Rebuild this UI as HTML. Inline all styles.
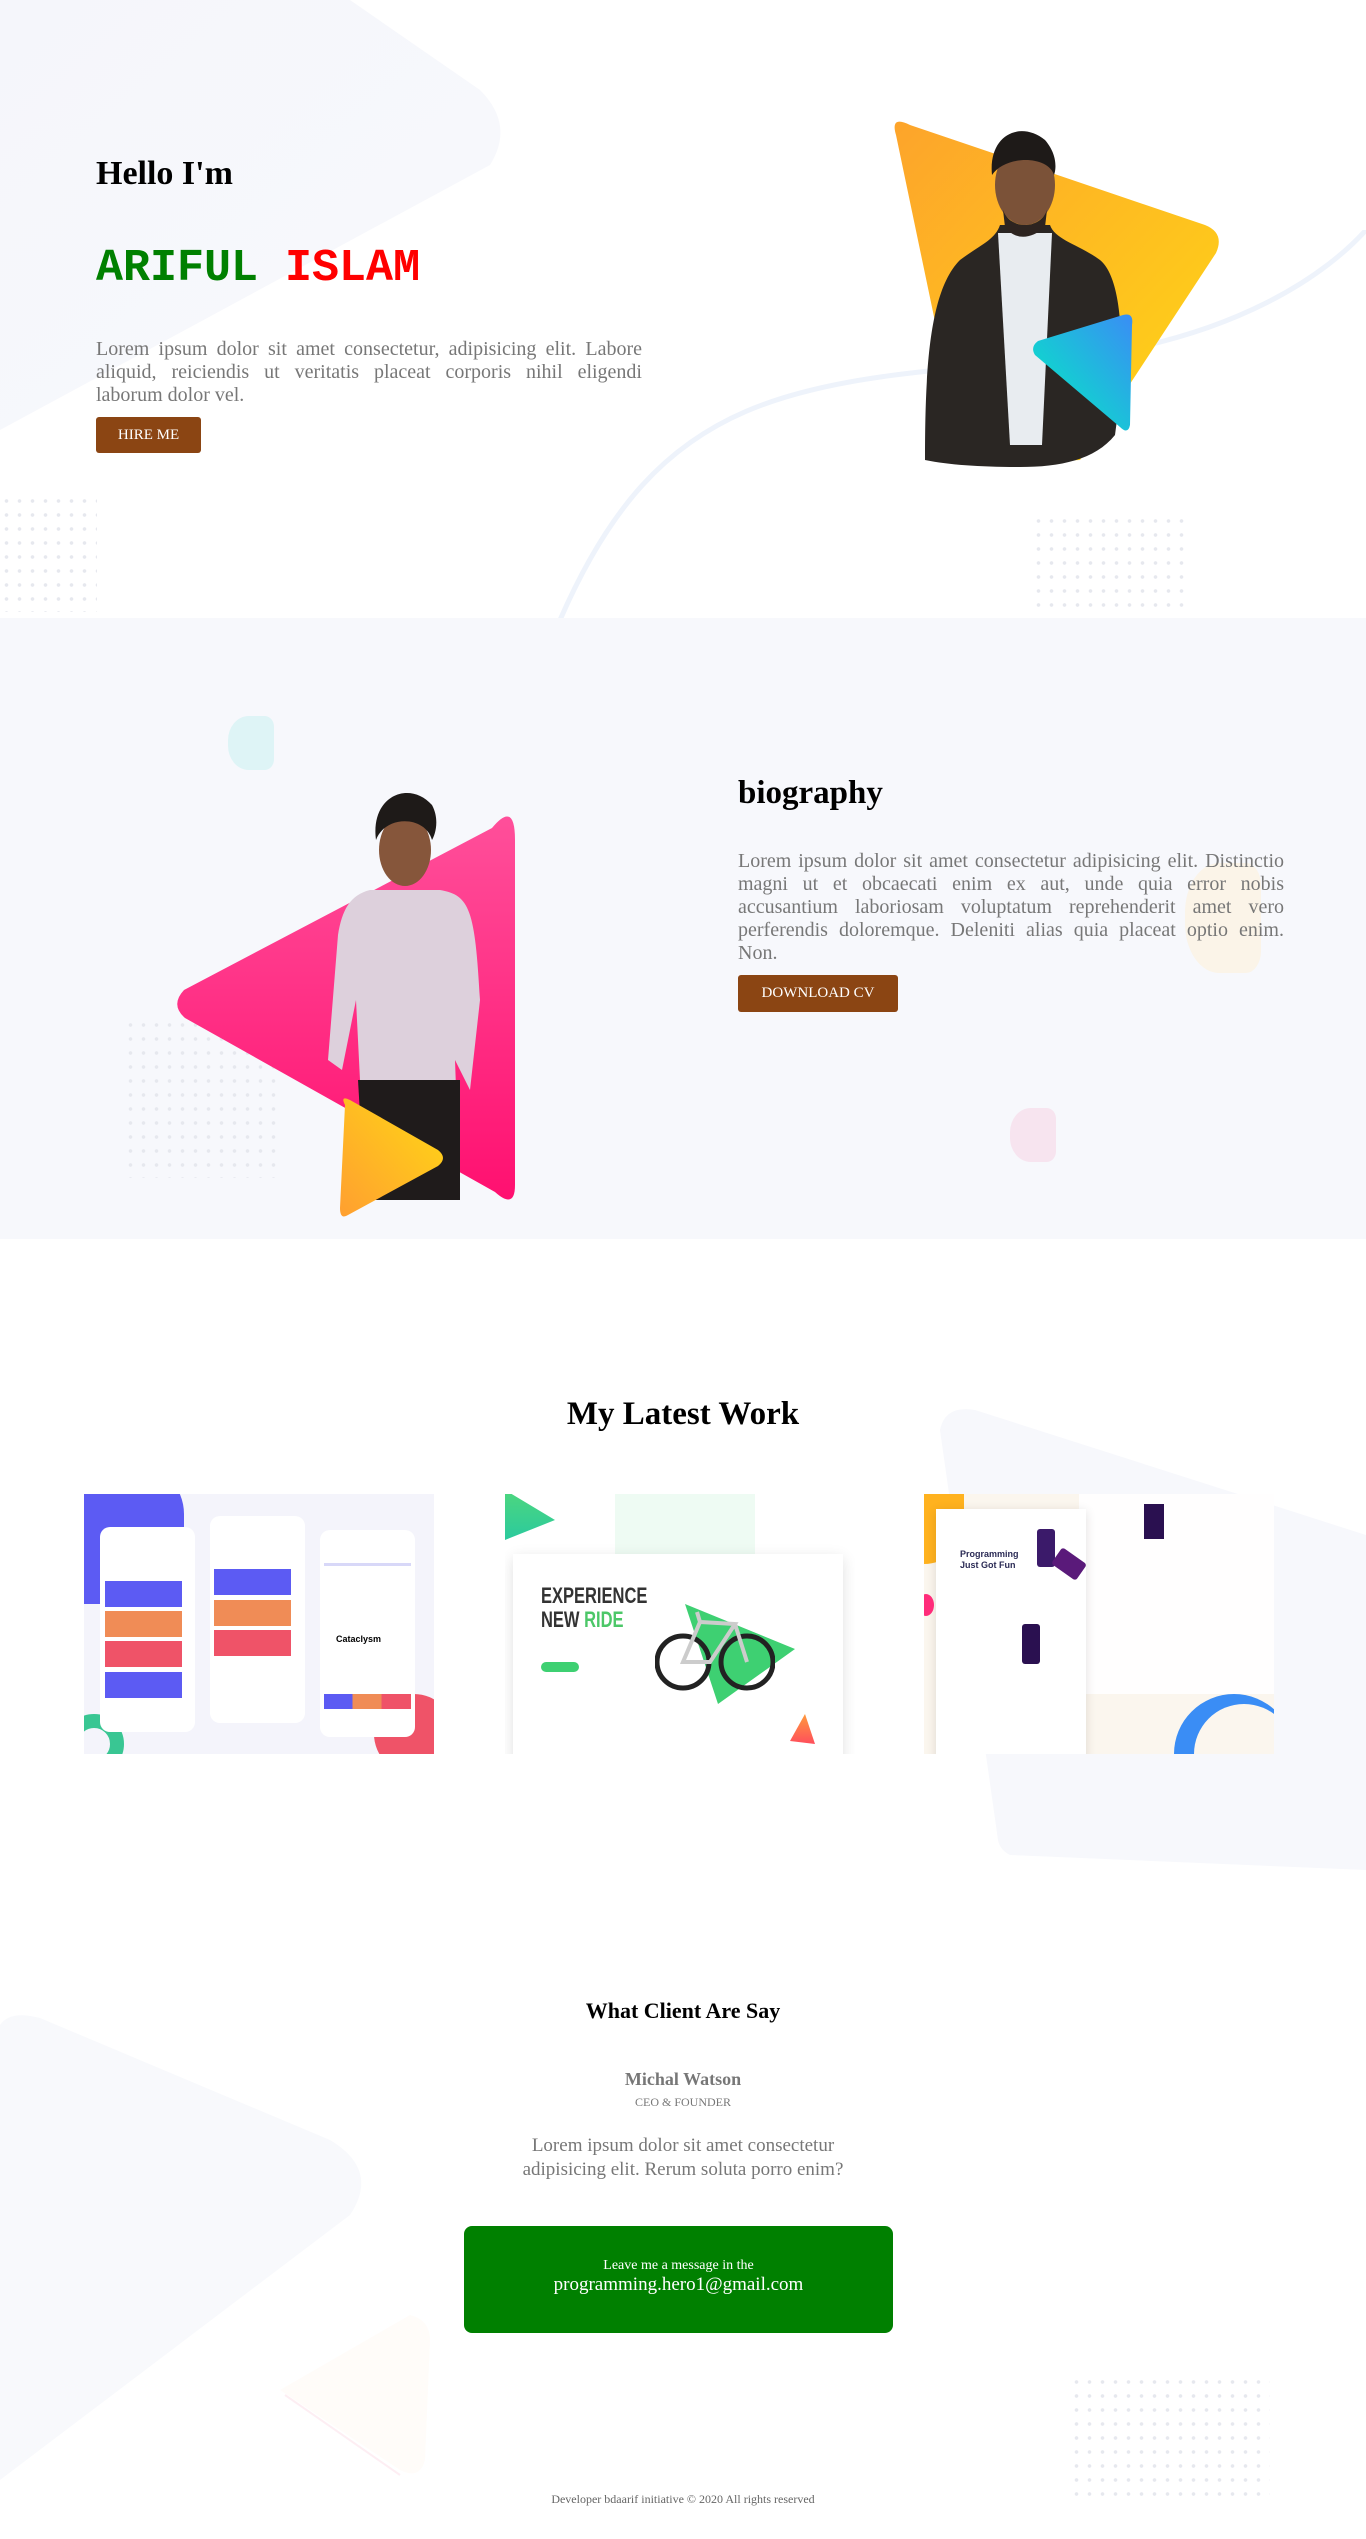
<!DOCTYPE html>
<html><head><meta charset="utf-8"><style>
*{margin:0;padding:0;box-sizing:border-box}
body{width:1366px;height:2539px;position:relative;overflow:hidden;background:#fff;font-family:"Liberation Serif",serif}
.a{position:absolute}
.dots{background-image:radial-gradient(circle,#e6e8ee 1.6px,transparent 2px);background-size:13px 14px}
.btn{background:#8B4513;color:#fff;font-size:15px;border-radius:3px;display:flex;align-items:center;justify-content:center}
p.j{text-align:justify;color:#777;font-size:20px;line-height:23px}
</style></head><body>

<!-- HERO -->
<svg class="a" style="left:0;top:0" width="520" height="440"><defs><linearGradient id="bg1" x1="0" y1="0" x2="1" y2="1"><stop offset="0" stop-color="#f5f6fb"/><stop offset="1" stop-color="#f8f9fc"/></linearGradient></defs>
<path d="M0 0 L350 0 L480 90 Q515 125 490 165 L0 430 Z" fill="url(#bg1)"/></svg>
<svg class="a" style="left:540px;top:230px" width="826" height="390"><path d="M20 390 C120 160 250 150 520 130 C700 110 790 40 826 0" fill="none" stroke="#eef3fb" stroke-width="5"/></svg>
<div class="a dots" style="left:0;top:494px;width:97px;height:118px"></div>
<div class="a dots" style="left:1032px;top:514px;width:158px;height:98px"></div>

<div class="a" style="left:96px;top:155px;font-size:34px;font-weight:bold;color:#000">Hello I'm</div>
<div class="a" style="left:96px;top:243px;font-family:'Liberation Mono',monospace;font-size:45px;font-weight:bold"><span style="color:#008000">ARIFUL</span> <span style="color:#f00">ISLAM</span></div>
<p class="a j" style="left:96px;top:338px;width:546px">Lorem ipsum dolor sit amet consectetur, adipisicing elit. Labore aliquid, reiciendis ut veritatis placeat corporis nihil eligendi laborum dolor vel.</p>
<div class="a btn" style="left:96px;top:417px;width:105px;height:36px">HIRE ME</div>

<svg class="a" style="left:870px;top:115px" width="360" height="360">
<defs><linearGradient id="y1" x1="0" y1="0" x2="1" y2="1"><stop offset="0" stop-color="#fda42b"/><stop offset="1" stop-color="#ffd815"/></linearGradient>
<linearGradient id="t1" x1="1" y1="0" x2="0" y2="1"><stop offset="0" stop-color="#3a8df5"/><stop offset="1" stop-color="#00f0c0"/></linearGradient></defs>
<path d="M26 20 Q20 0 40 10 L335 110 Q355 118 346 138 L210 345 L95 350 Z" fill="url(#y1)"/>
<g>
<path d="M55 345 C55 250 60 175 90 145 C110 130 125 125 130 110 L180 110 C185 125 210 130 230 145 C255 165 255 250 245 320 C225 345 190 352 150 352 C110 352 80 350 55 345Z" fill="#2a2623"/>
<path d="M128 118 L182 118 L172 330 L140 330 Z" fill="#e8ecf0"/>
<ellipse cx="155" cy="70" rx="30" ry="40" fill="#7b5238"/>
<path d="M122 60 C118 20 150 5 175 25 C188 40 186 55 184 60 C178 40 135 40 122 60Z" fill="#1e1a18"/>
<path d="M133 95 C140 115 170 115 177 95 L175 112 C160 125 145 125 135 112Z" fill="#2d2420"/>
</g>
<path d="M165 240 Q160 232 168 226 L253 200 Q264 197 262 210 L260 310 Q258 320 250 312 Z" fill="url(#t1)"/>
</svg>

<!-- BIO -->
<div class="a" style="left:0;top:618px;width:1366px;height:621px;background:#f7f8fc;overflow:hidden">
<div class="a" style="left:228px;top:98px;width:46px;height:54px;background:#def4f6;border-radius:45% 20% 20% 45%"></div>
<div class="a" style="left:1010px;top:490px;width:46px;height:54px;background:#f7e4ef;border-radius:45% 20% 20% 45%"></div>
<div class="a" style="left:1185px;top:245px;width:76px;height:110px;background:#fbf3e2;border-radius:45% 20% 20% 45%;opacity:.8"></div>
<div class="a dots" style="left:124px;top:400px;width:158px;height:160px"></div>
</div>
<svg class="a" style="left:170px;top:760px" width="360" height="460">
<defs><linearGradient id="p1" x1="0" y1="0" x2="0" y2="1"><stop offset="0" stop-color="#ff4f9a"/><stop offset="1" stop-color="#ff1070"/></linearGradient>
<linearGradient id="y2" x1="1" y1="0" x2="0" y2="1"><stop offset="0" stop-color="#ffd815"/><stop offset="1" stop-color="#ff9f30"/></linearGradient></defs>
<path d="M322 68 Q345 40 345 80 L345 425 Q345 450 325 432 L15 258 Q0 245 14 230 Z" fill="url(#p1)"/>
<path d="M200 130 C180 135 172 150 168 175 L158 300 L172 310 L186 240 L190 320 L200 430 L290 440 L285 300 L300 330 L310 240 C305 150 300 135 270 130 Z" fill="#ddd0dc"/>
<path d="M188 320 L290 320 L290 440 L195 440 Z" fill="#1f1b1b"/>
<ellipse cx="235" cy="90" rx="26" ry="36" fill="#86563b"/>
<path d="M206 80 C200 35 240 20 262 45 C270 60 265 75 262 80 C255 55 215 55 206 80Z" fill="#1e1a18"/>
<path d="M175 345 Q170 335 180 340 L268 390 Q278 398 268 406 L178 455 Q170 460 170 448 Z" fill="url(#y2)"/>
</svg>
<div class="a" style="left:738px;top:775px;font-size:33px;font-weight:bold;color:#000">biography</div>
<p class="a j" style="left:738px;top:850px;width:546px">Lorem ipsum dolor sit amet consectetur adipisicing elit. Distinctio magni ut et obcaecati enim ex aut, unde quia error nobis accusantium laboriosam voluptatum reprehenderit amet vero perferendis doloremque. Deleniti alias quia placeat optio enim. Non.</p>
<div class="a btn" style="left:738px;top:975px;width:160px;height:37px">DOWNLOAD CV</div>

<!-- WORK -->
<svg class="a" style="left:900px;top:1400px" width="466" height="480"><path d="M40 30 Q45 5 75 10 L466 135 L466 470 L110 455 Q100 450 98 440 Z" fill="#f7f8fc"/></svg>
<div class="a" style="left:0;top:1396px;width:1366px;text-align:center;font-size:33px;font-weight:bold">My Latest Work</div>

<div class="a" style="left:84px;top:1494px;width:350px;height:260px;background:#f4f4fb;overflow:hidden">
<div class="a" style="left:-20px;top:-30px;width:120px;height:140px;background:#5c5bf3;border-radius:0 50px 60px 0"></div>
<div class="a" style="left:-20px;top:220px;width:60px;height:60px;border:14px solid #39c693;border-radius:50%"></div>
<div class="a" style="left:290px;top:200px;width:80px;height:80px;background:#ef5368;border-radius:50%"></div>
<div class="a" style="left:16px;top:33px;width:95px;height:205px;background:#fff;border-radius:10px"></div>
<div class="a" style="left:21px;top:87px;width:77px;height:26px;background:#5c5bf3"></div>
<div class="a" style="left:21px;top:117px;width:77px;height:26px;background:#f08c56"></div>
<div class="a" style="left:21px;top:147px;width:77px;height:26px;background:#ef5368"></div>
<div class="a" style="left:21px;top:178px;width:77px;height:26px;background:#5c5bf3"></div>
<div class="a" style="left:126px;top:22px;width:95px;height:207px;background:#fff;border-radius:10px"></div>
<div class="a" style="left:130px;top:75px;width:77px;height:26px;background:#5c5bf3"></div>
<div class="a" style="left:130px;top:106px;width:77px;height:26px;background:#f08c56"></div>
<div class="a" style="left:130px;top:136px;width:77px;height:26px;background:#ef5368"></div>
<div class="a" style="left:236px;top:36px;width:95px;height:207px;background:#fff;border-radius:10px"></div>
<div class="a" style="left:240px;top:69px;width:87px;height:3px;background:#d8d8f8"></div>
<div class="a" style="left:240px;top:200px;width:87px;height:15px;background:linear-gradient(90deg,#5c5bf3 33%,#f08c56 33% 66%,#ef5368 66%)"></div>
<div class="a" style="left:252px;top:140px;font-family:'Liberation Sans';font-size:9px;font-weight:bold">Cataclysm</div>
</div>

<div class="a" style="left:505px;top:1494px;width:350px;height:260px;background:#fff;overflow:hidden">
<div class="a" style="left:-10px;top:-10px;width:60px;height:60px;background:linear-gradient(#52d87a,#28c9a0);clip-path:polygon(0 0,100% 60%,0 100%)"></div>
<div class="a" style="left:110px;top:0;width:140px;height:260px;background:#eefbf3"></div>
<div class="a" style="left:8px;top:60px;width:330px;height:212px;background:#fff;box-shadow:0 4px 14px rgba(0,0,0,.12)"></div>
<div class="a" style="left:36px;top:90px;font-family:'Liberation Sans';font-size:22px;font-weight:bold;line-height:24px;color:#333;transform:scaleX(.75);transform-origin:left">EXPERIENCE<br>NEW <span style="color:#4cc768">RIDE</span></div>
<div class="a" style="left:36px;top:168px;width:38px;height:10px;background:#3ed072;border-radius:5px"></div>
<div class="a" style="left:180px;top:110px;width:110px;height:100px;background:#3ed072;clip-path:polygon(0 0,100% 45%,30% 100%)"></div>
<svg class="a" style="left:150px;top:110px" width="120" height="90"><circle cx="28" cy="58" r="26" fill="none" stroke="#222" stroke-width="5"/><circle cx="92" cy="58" r="26" fill="none" stroke="#222" stroke-width="5"/><path d="M28 58 L55 58 L80 20 L45 18 Z M80 20 L92 58 M45 18 L42 8" fill="none" stroke="#ccc" stroke-width="4"/></svg>
<div class="a" style="left:285px;top:220px;width:25px;height:30px;background:linear-gradient(#ff9a3c,#ff4e5c);clip-path:polygon(60% 0,100% 100%,0 90%)"></div>
</div>

<div class="a" style="left:924px;top:1494px;width:350px;height:260px;background:#fbf6ee;overflow:hidden">
<div class="a" style="left:-20px;top:-20px;width:60px;height:90px;background:#ffb21f;border-radius:0 0 40px 0"></div>
<div class="a" style="left:250px;top:200px;width:120px;height:120px;border-radius:50%;background:#3a8df5"></div>
<div class="a" style="left:270px;top:210px;width:100px;height:100px;border-radius:50%;background:#fbf6ee"></div>
<div class="a" style="left:155px;top:0;width:195px;height:200px;background:#fff;opacity:.9"></div>
<div class="a" style="left:12px;top:15px;width:150px;height:255px;background:#fff;box-shadow:0 2px 10px rgba(0,0,0,.12)"></div>
<div class="a" style="left:36px;top:55px;font-family:'Liberation Sans';font-size:9px;font-weight:bold;color:#2b2b55;line-height:11px">Programming<br>Just Got Fun</div>
<div class="a" style="left:113px;top:35px;width:18px;height:38px;background:#3b1a6a;border-radius:3px"></div>
<div class="a" style="left:130px;top:60px;width:30px;height:20px;background:#5a1a7a;border-radius:3px;transform:rotate(35deg)"></div>
<div class="a" style="left:98px;top:130px;width:18px;height:40px;background:#2a1050;border-radius:3px"></div>
<div class="a" style="left:-6px;top:100px;width:16px;height:22px;background:#ff2c7a;border-radius:50%"></div>
<div class="a" style="left:220px;top:10px;width:20px;height:35px;background:#2a1050"></div>
</div>

<!-- TESTIMONIAL -->
<svg class="a" style="left:0;top:2010px" width="440" height="480"><path d="M0 15 Q10 0 40 8 L330 130 Q380 160 350 205 L0 470 Z" fill="#f8f9fc"/>
<path d="M280 380 L400 460 Q420 470 425 450 L430 330 Q430 310 410 305 Z" fill="#fffcf9"/>
<path d="M285 385 L400 465" stroke="#fdeef3" stroke-width="2"/></svg>
<div class="a dots" style="left:1070px;top:2375px;width:200px;height:125px"></div>
<div class="a" style="left:0;top:1998px;width:1366px;text-align:center;font-size:22px;font-weight:bold">What Client Are Say</div>
<div class="a" style="left:0;top:2069px;width:1366px;text-align:center;font-size:18px;font-weight:bold;color:#777">Michal Watson</div>
<div class="a" style="left:0;top:2095px;width:1366px;text-align:center;font-size:12px;color:#777">CEO &amp; FOUNDER</div>
<div class="a" style="left:503px;top:2134px;width:360px;text-align:center;font-size:19px;line-height:24px;color:#777">Lorem ipsum dolor sit amet consectetur adipisicing elit. Rerum soluta porro enim?</div>
<div class="a" style="left:464px;top:2226px;width:429px;height:107px;background:#008000;border-radius:8px;color:#fff;text-align:center">
<div style="padding-top:32px;font-size:14px">Leave me a message in the</div>
<div style="font-size:19px;line-height:22px">programming.hero1@gmail.com</div>
</div>
<div class="a" style="left:0;top:2492px;width:1366px;text-align:center;font-size:12px;color:#666">Developer bdaarif initiative © 2020 All rights reserved</div>
</body></html>
